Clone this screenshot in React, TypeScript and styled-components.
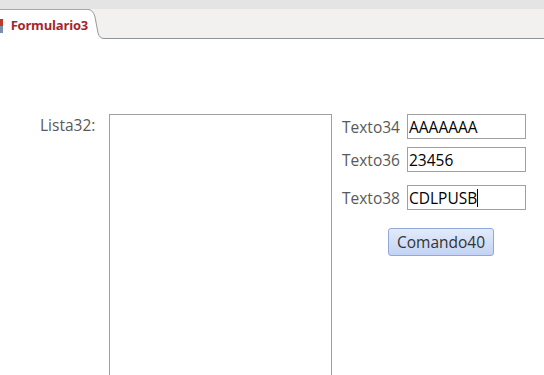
import styled, { createGlobalStyle } from "styled-components";

const GlobalStyle = createGlobalStyle`
  html, body {
    margin: 0;
    padding: 0;
    background: #ffffff;
    overflow: hidden;
  }
  body {
    font-family: "Open Sans", "Noto Sans", sans-serif;
  }
`;

const Page = styled.div`
  width: 544px;
  height: 375px;
  display: flex;
  flex-direction: column;
  background: #ffffff;
  overflow: hidden;
`;

const TabStrip = styled.div`
  height: 29px;
  border-top: 9px solid #e4e4e4;
  border-bottom: 1px solid #8c9499;
  background: #f2f1f0;
  display: flex;
  align-items: flex-end;
`;

const Tab = styled.div`
  display: flex;
  align-items: stretch;
  height: 30px;
  margin-bottom: -1px;
`;

const TabBody = styled.div`
  display: flex;
  align-items: center;
  gap: 8px;
  background: #ffffff;
  border-top: 1px solid #a8a8a8;
  width: 88px;
`;

const TabIcon = styled.span`
  width: 3px;
  height: 14px;
  margin-top: 2px;
  background: linear-gradient(#c0392b 0 50%, #7a8fb0 50% 100%);
`;

const TabLabel = styled.span`
  font-family: "Open Sans", sans-serif;
  font-weight: 700;
  font-size: 13px;
  color: #a4262c;
  margin-top: 1px;
  letter-spacing: -0.2px;
`;

const Form = styled.div`
  flex: 1;
  display: flex;
  padding: 75px 0 0 40px;
`;

const ListLabel = styled.span`
  width: 69px;
  font-size: 15.5px;
  color: #595959;
  line-height: 20px;
  padding-top: 1px;
`;

const ListBox = styled.div`
  width: 221px;
  height: 400px;
  border: 1px solid #a0a0a0;
  background: #ffffff;
`;

const Fields = styled.div`
  margin-left: 10px;
  display: flex;
  flex-direction: column;
`;

const FieldRow = styled.div<{ gap: number }>`
  display: flex;
  align-items: center;
  margin-bottom: ${({ gap }) => gap}px;
`;

const FieldLabel = styled.span`
  width: 65px;
  font-size: 15.5px;
  color: #595959;
  white-space: nowrap;
`;

const TextBox = styled.div`
  box-sizing: border-box;
  width: 119px;
  height: 25px;
  border: 1px solid #a0a0a0;
  font-size: 15.5px;
  color: #000000;
  display: flex;
  align-items: center;
  padding-left: 1px;
`;

const Caret = styled.span`
  width: 1px;
  height: 18px;
  background: #000000;
`;

const ButtonRow = styled.div`
  display: flex;
  padding: 18px 0 0 46px;
`;

const Button = styled.button`
  width: 106px;
  height: 28px;
  border: 1px solid #8fa9d9;
  border-radius: 3px;
  background: linear-gradient(#e2ebfb, #c3d3f3);
  font-family: "Open Sans", "Noto Sans", sans-serif;
  font-size: 15.5px;
  color: #333333;
  padding: 0;
`;

const fields = [
  { label: "Texto34", value: "AAAAAAA", gap: 8 },
  { label: "Texto36", value: "23456", gap: 13 },
  { label: "Texto38", value: "CDLPUSB", gap: 0, caret: true },
];

export default function App() {
  return (
    <Page>
      <GlobalStyle />
      <TabStrip>
        <Tab>
          <TabBody>
            <TabIcon />
            <TabLabel>Formulario3</TabLabel>
          </TabBody>
          <svg width="16" height="30" viewBox="0 0 16 30">
            <path d="M0 0.5 Q5 0.5 7 8 L10 24 Q11.5 29.5 16 29.5 L16 30 L0 30 Z" fill="#ffffff" />
            <path d="M0 0.5 Q5 0.5 7 8 L10 24 Q11.5 29.5 16 29.5" fill="none" stroke="#9a9a9a" strokeWidth="1" />
          </svg>
        </Tab>
      </TabStrip>
      <Form>
        <ListLabel>Lista32:</ListLabel>
        <ListBox />
        <Fields>
          {fields.map(f => (
            <FieldRow key={f.label} gap={f.gap}>
              <FieldLabel>{f.label}</FieldLabel>
              <TextBox>
                {f.value}
                {f.caret && <Caret />}
              </TextBox>
            </FieldRow>
          ))}
          <ButtonRow>
            <Button>Comando40</Button>
          </ButtonRow>
        </Fields>
      </Form>
    </Page>
  );
}
